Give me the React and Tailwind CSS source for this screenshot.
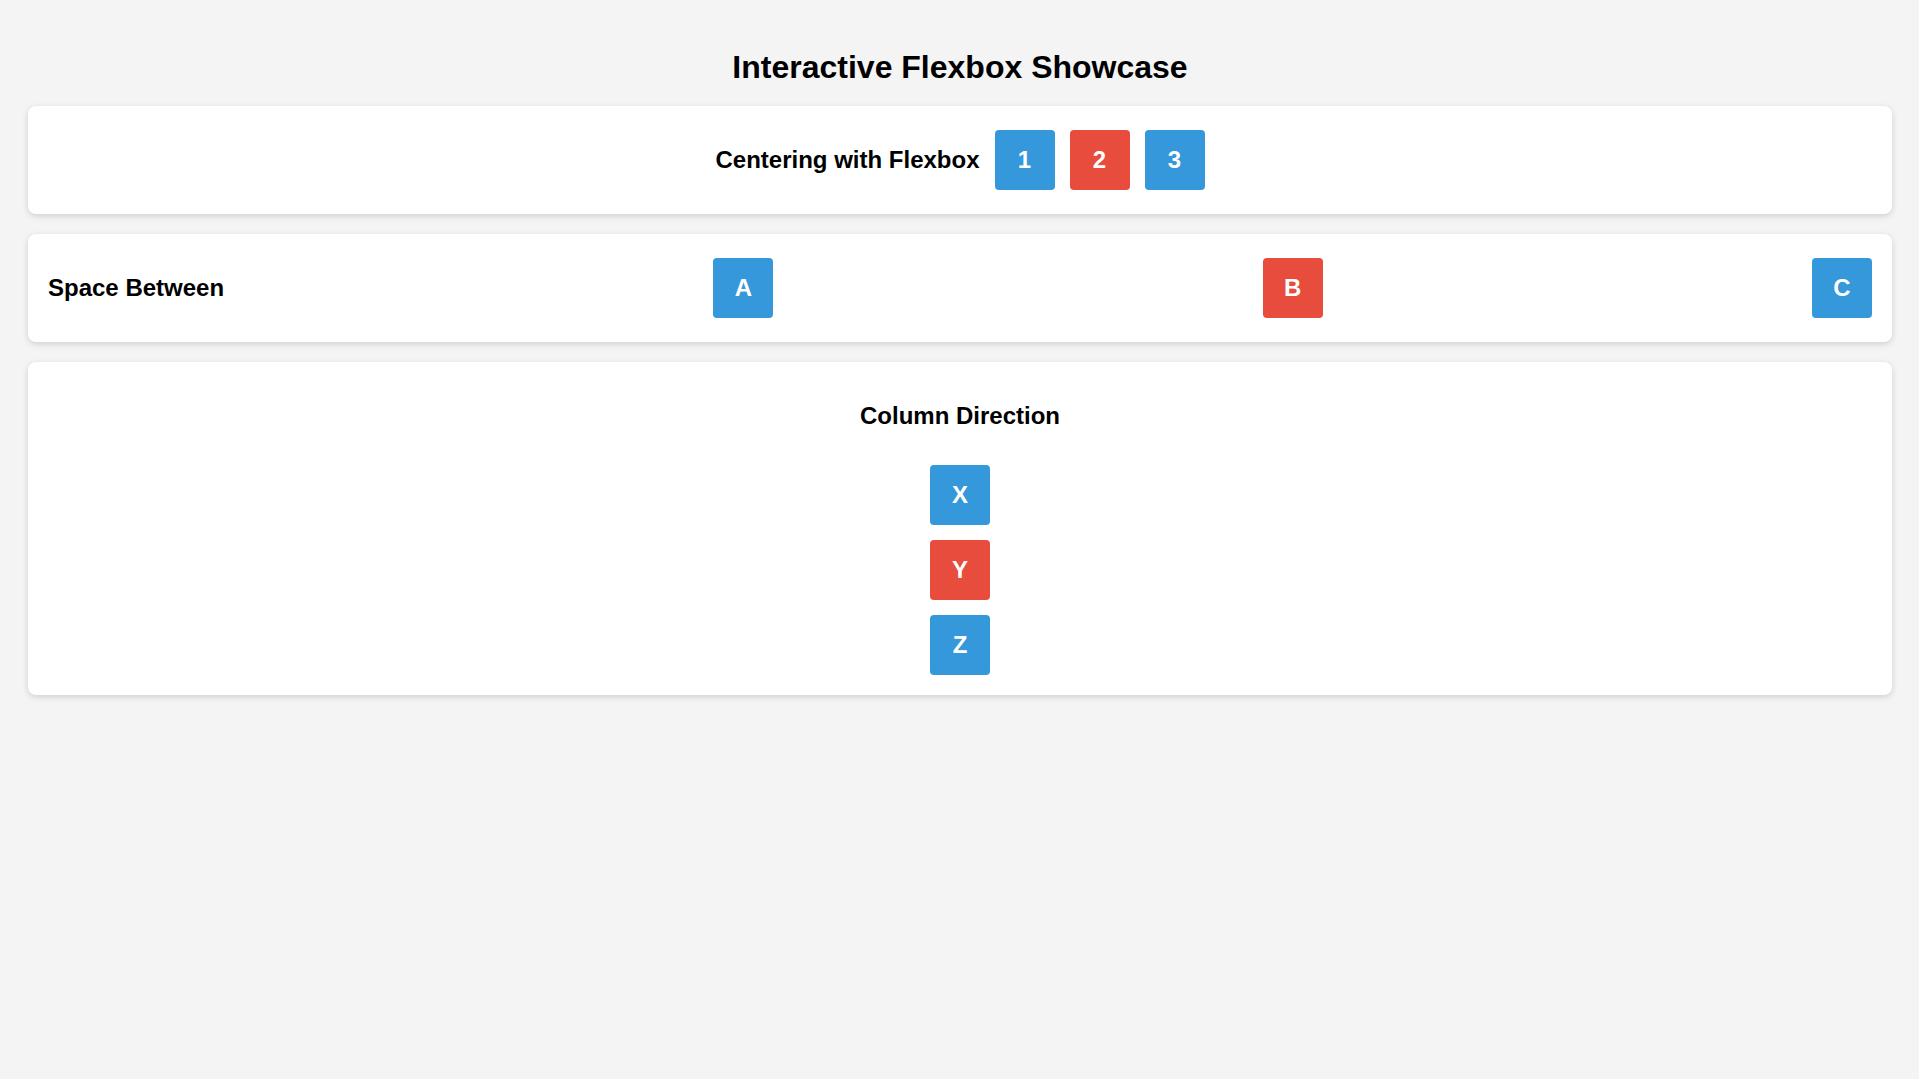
import React from 'react';

const Box = ({ label, color }) => (
  <div
    className={`w-[60px] h-[60px] rounded-[4px] flex items-center justify-center text-white font-bold text-[24px] ${
      color === 'red' ? 'bg-[#e74c3c]' : 'bg-[#3498db]'
    }`}
  >
    {label}
  </div>
);

const Card = ({ className, children }) => (
  <div className={`bg-white rounded-[8px] p-5 shadow-[0_2px_6px_rgba(0,0,0,0.15)] ${className}`}>
    {children}
  </div>
);

const Heading = ({ children }) => (
  <h2 className="text-[24px] font-bold leading-[28px] my-5 text-black">{children}</h2>
);

const App = () => {
  return (
    <div className="min-h-screen bg-[#f4f4f4] pl-7 pr-[27px] pt-7 pb-10 font-['Liberation_Sans',Arial,sans-serif]">
      <h1 className="text-[32px] font-bold leading-[37px] text-center text-black mt-[21px] mb-5">
        Interactive Flexbox Showcase
      </h1>

      <div className="flex flex-col gap-5">
        {/* centered row */}
        <Card className="flex items-center justify-center gap-[15px]">
          <Heading>Centering with Flexbox</Heading>
          <Box label="1" />
          <Box label="2" color="red" />
          <Box label="3" />
        </Card>

        {/* space between */}
        <Card className="flex items-center justify-between">
          <Heading>Space Between</Heading>
          <Box label="A" />
          <Box label="B" color="red" />
          <Box label="C" />
        </Card>

        {/* column */}
        <Card className="flex flex-col items-center gap-[15px]">
          <Heading>Column Direction</Heading>
          <Box label="X" />
          <Box label="Y" color="red" />
          <Box label="Z" />
        </Card>
      </div>
    </div>
  );
};

export default App;
